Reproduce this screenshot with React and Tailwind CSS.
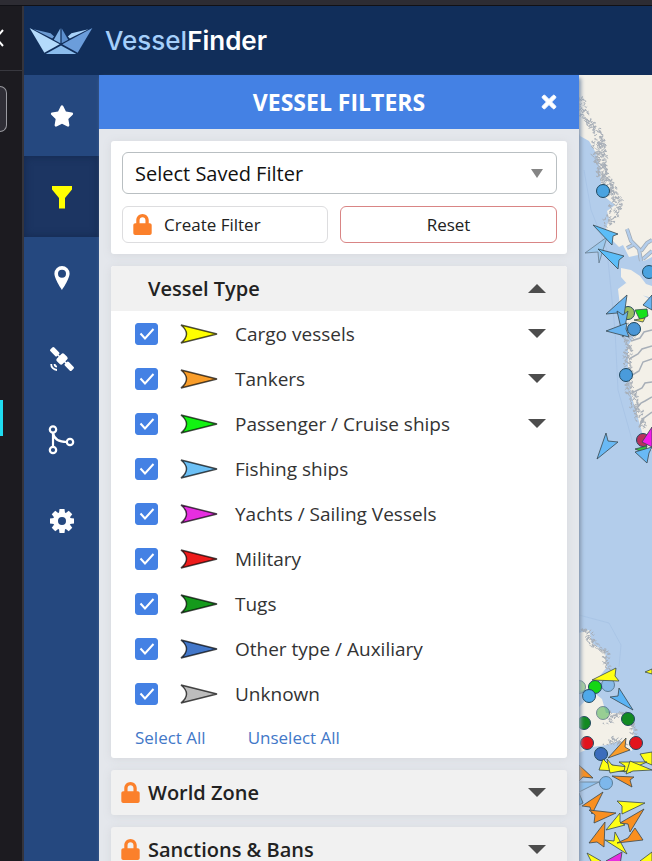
import { useState } from 'react';
import { FaLock, FaStar, FaTimes } from 'react-icons/fa';

const vesselTypes = [
  { label: 'Cargo vessels', color: '#ffff00', expandable: true },
  { label: 'Tankers', color: '#f99d2a', expandable: true },
  { label: 'Passenger / Cruise ships', color: '#12f212', expandable: true },
  { label: 'Fishing ships', color: '#6cc0f5' },
  { label: 'Yachts / Sailing Vessels', color: '#e62ee0' },
  { label: 'Military', color: '#ee1c1c' },
  { label: 'Tugs', color: '#159a1c' },
  { label: 'Other type / Auxiliary', color: '#4377c9' },
  { label: 'Unknown', color: '#bcbcbc' },
];

const circles = [
  { x: 24, y: 116, fill: '#4aa3e0' },
  { x: 70, y: 197, fill: '#4aa3e0' },
  { x: 49, y: 238, fill: '#98bd62' },
  { x: 55, y: 254, fill: '#4a96d6' },
  { x: 47, y: 300, fill: '#4a9bdb' },
  { x: 64, y: 365, fill: '#b8325c' },
  { x: 0, y: 612, fill: '#7cc070', faded: true },
  { x: 29, y: 610, fill: '#6aaee8', faded: true },
  { x: 16, y: 612, fill: '#14d614' },
  { x: 10, y: 621, fill: '#4fa9ea' },
  { x: 24, y: 638, fill: '#5cb85c', faded: true },
  { x: 49, y: 644, fill: '#128a22' },
  { x: 5, y: 648, fill: '#128a22' },
  { x: 8, y: 668, fill: '#e3141c' },
  { x: 57, y: 668, fill: '#e3141c' },
  { x: 22, y: 679, fill: '#3b6cbc' },
  { x: 27, y: 708, fill: '#5aa9ec', faded: true },
];

const arrows = [
  { points: '6,178 28,162 20,188 19,177', fill: '#8fc6ee', faded: true },
  { points: '14,150 39,159 34,161 33,170', fill: '#5bbdf8' },
  { points: '19,174 45,181 40,185 39,194', fill: '#5bbdf8' },
  { points: '48,220 27,239 38,238 45,241', fill: '#6ab4f0' },
  { points: '44,262 38,236 44,240 49,236', fill: '#6ab4f0' },
  { points: '27,256 48,248 47,254 50,262', fill: '#6ab4f0' },
  { points: '56,235 68,234 69,241 61,245', fill: '#18e018' },
  { points: '55,245 66,243 64,247', fill: '#e4e04a' },
  { points: '64,230 73,220 73,235', fill: '#6ab4f0' },
  { points: '18,384 27,358 29,366 39,367', fill: '#69b9f5' },
  { points: '63,367 73,352 73,372', fill: '#f31be8' },
  { points: '56,374 68,371 66,378', fill: '#35c43a' },
  { points: '56,377 73,372 70,378 68,388', fill: '#69b9f5' },
  { points: '66,597 73,594 73,599', fill: '#ffff14' },
  { points: '13,605 37,593 36,601 40,606', fill: '#ffff14' },
  { points: '54,635 40,613 39,621 31,622', fill: '#5bb4f5' },
  { points: '29,683 47,663 46,672 51,675', fill: '#f99d2a' },
  { points: '61,679 73,677 73,690 66,687', fill: '#ffff14' },
  { points: '24,684 20,695 52,697 28,688', fill: '#ffff14' },
  { points: '28,684 31,698 58,693 33,690', fill: '#ffff14' },
  { points: '40,687 68,687 45,697 46,691', fill: '#ffff14' },
  { points: '47,699 51,686 73,695 54,696', fill: '#ffff14' },
  { points: '33,701 55,702 51,705 53,712', fill: '#f98f20' },
  { points: '0,690 14,703 4,702 0,706', fill: '#f98f20' },
  { points: '0,707 20,707 0,717', fill: '#7cbcf0', faded: true },
  { points: '0,718 4,728 0,730', fill: '#5bb4f5' },
  { points: '24,717 3,731 11,732 13,739', fill: '#f98f20' },
  { points: '37,738 10,735 16,740 15,748', fill: '#f98f20' },
  { points: '66,728 38,726 43,731 43,739', fill: '#ffff14' },
  { points: '27,755 41,738 41,747 46,750', fill: '#ffff14' },
  { points: '65,734 41,748 49,749 51,757', fill: '#f98f20' },
  { points: '26,747 10,768 18,767 25,772', fill: '#f98f20' },
  { points: '48,779 26,765 35,766 36,757', fill: '#ffff14' },
  { points: '64,765 38,768 49,763 56,753', fill: '#f98f20' },
  { points: '43,777 27,786 41,790', fill: '#e62ee0' },
  { points: '8,778 22,786 14,790', fill: '#ffff14' },
  { points: '73,777 61,786 73,790', fill: '#ffff14' },
];

const coasts = [
  { points: [[0, 22], [3, 38], [9, 48], [18, 56], [22, 72], [22, 92], [27, 108], [30, 118]], spread: 5, step: 0.5 },
  { points: [[20, 66], [22, 98], [30, 110], [34, 120], [40, 126], [34, 138], [30, 150]], spread: 6, step: 0.5 },
  { points: [[54, 248], [49, 262], [48, 284], [50, 310], [57, 332], [63, 352]], spread: 4, step: 0.5 },
  { points: [[0, 555], [10, 557], [13, 569], [26, 577], [28, 594]], spread: 3, step: 0.7 },
  { points: [[28, 648], [34, 640], [44, 638], [52, 646], [54, 660]], spread: 3, step: 0.7 },
  { points: [[28, 669], [36, 664], [46, 668]], spread: 3, step: 0.7 },
];

// Turns a plain coastline into short broken strokes, the same ones on every render
function roughCoast({ points, spread, step }) {
  let seed = 7;
  const rand = () => {
    seed = (seed * 16807) % 2147483647;
    return seed / 2147483647 - 0.5;
  };
  let d = '';
  for (let i = 1; i < points.length; i++) {
    const [x0, y0] = points[i - 1];
    const [x1, y1] = points[i];
    const count = Math.round(Math.hypot(x1 - x0, y1 - y0) / step);
    for (let k = 0; k < count; k++) {
      const t = k / count;
      const x = x0 + (x1 - x0) * t + rand() * spread * 2;
      const y = y0 + (y1 - y0) * t + rand() * 3;
      d += `M${x.toFixed(1)} ${y.toFixed(1)}l${(rand() * 5).toFixed(1)} ${(rand() * 4).toFixed(1)}l${(rand() * 4).toFixed(1)} ${(rand() * 4).toFixed(1)}`;
    }
  }
  return d;
}

function BoatLogo() {
  return (
    <svg className="h-7 w-16 shrink-0" viewBox="0 0 196 84" aria-hidden="true">
      <path d="M14 6 66 18 77 28 71 34Z" fill="#6b9ad2" />
      <path d="M182 6 130 18 119 28 125 34Z" fill="#a9d3fa" />
      <path d="M96 3 76 38 96 49Z" fill="#7fb0e4" />
      <path d="M100 3 120 38 100 49Z" fill="#5c8fce" />
      <path d="M2 2 94 52 47 78Z" fill="#b4dafb" />
      <path d="M194 2 102 52 149 78Z" fill="#6b9ddb" />
      <path d="M98 56 51 82 145 82Z" fill="#8bbcec" />
    </svg>
  );
}

function FunnelIcon() {
  return (
    <svg className="h-6 w-6" viewBox="0 0 24 24" fill="currentColor" aria-hidden="true">
      <path d="M2 1h20v3.500L15 13v10.500H9V13L2 4.500Z" />
    </svg>
  );
}

function PinIcon() {
  return (
    <svg className="h-6 w-6" viewBox="0 0 24 24" fill="currentColor" fillRule="evenodd" aria-hidden="true">
      <path d="M12 0a7.600 7.600 0 0 0-7.600 7.600C4.400 13 12 24 12 24s7.600-11 7.600-16.400A7.600 7.600 0 0 0 12 0Zm0 3.800a4 4 0 1 1 0 8 4 4 0 0 1 0-8Z" />
    </svg>
  );
}

function SatelliteIcon() {
  return (
    <svg className="h-6 w-6" viewBox="0 0 24 24" fill="currentColor" aria-hidden="true">
      <g transform="rotate(45 12 12)">
        <rect x="-3" y="9.300" width="9.500" height="5.400" rx="1.500" />
        <rect x="17.500" y="9.300" width="9.500" height="5.400" rx="1.500" />
        <rect x="8" y="6.800" width="8" height="10.400" rx="2" />
        <path d="M6 11.200h12v1.600H6Z" />
      </g>
      <path d="M1.200 17a5.800 5.800 0 0 0 5.800 6M4.600 17A2.600 2.600 0 0 0 7 19.600" fill="none" stroke="currentColor" strokeWidth="1.800" />
    </svg>
  );
}

function RouteIcon() {
  return (
    <svg className="h-8 w-7" viewBox="0 0 28 32" fill="none" stroke="currentColor" strokeWidth="2.200" aria-hidden="true">
      <circle cx="5" cy="5.500" r="3.200" />
      <circle cx="5" cy="26" r="3.200" />
      <circle cx="22" cy="18" r="3.200" />
      <path d="M5 8.500v14.500M5 9c1 6 6 9 14 9" />
    </svg>
  );
}

function GearIcon() {
  return (
    <svg className="h-6 w-6" viewBox="0 0 24 24" aria-hidden="true">
      <circle cx="12" cy="12" r="6.500" fill="none" stroke="currentColor" strokeWidth="5" />
      {[0, 45, 90, 135, 180, 225, 270, 315].map(angle => (
        <path key={angle} d="M9 4 9.500 0h5l.5 4Z" fill="currentColor" transform={`rotate(${angle} 12 12)`} />
      ))}
    </svg>
  );
}

function SideItem({ label, active, children }) {
  return (
    <button
      type="button"
      aria-label={label}
      className={`flex h-[81px] w-full items-center justify-center ${
        active ? 'bg-[#1c3562] text-[#ffff00] shadow-[inset_0_0_8px_#14294f]' : 'text-white'
      }`}
    >
      {children}
    </button>
  );
}

function Triangle({ up }) {
  return (
    <svg className="h-[9px] w-[18px] shrink-0 text-[#4d4d4d]" viewBox="0 0 18 9" fill="currentColor" aria-hidden="true">
      <path d={up ? 'M0 9 9 0l9 9Z' : 'M0 0h18L9 9Z'} />
    </svg>
  );
}

function VesselRow({ label, color, expandable, checked, onChange }) {
  return (
    <li className="flex h-[45px] items-center justify-between pl-6 pr-[21px]">
      <label className="flex items-center">
        <span className="grid place-items-center">
          <input
            type="checkbox"
            checked={checked}
            onChange={onChange}
            className="col-start-1 row-start-1 h-[22px] w-[23px] appearance-none rounded-[3px] border border-[#4481e4] checked:bg-[#4481e4]"
          />
          {checked && (
            <svg className="pointer-events-none col-start-1 row-start-1 h-4 w-4" viewBox="0 0 16 16" fill="none" stroke="white" strokeWidth="2" aria-hidden="true">
              <path d="m1.500 7.500 4.500 5 8.500-9.500" />
            </svg>
          )}
        </span>
        <svg className="ml-[22px] h-5 w-[38px]" viewBox="0 0 38 20" aria-hidden="true">
          <path d="M1 1 37 10 1 19Q12 10 1 1Z" fill={color} stroke="#000" strokeOpacity="0.7" strokeWidth="1.500" />
        </svg>
        <span className="ml-[17px] text-[19px] leading-6 text-[#333]">{label}</span>
      </label>
      {expandable && (
        <button type="button" aria-label={`Expand ${label}`}>
          <Triangle />
        </button>
      )}
    </li>
  );
}

function LockedSection({ title }) {
  return (
    <section className="shrink-0 rounded-[3px] bg-[#f1f1f1] shadow-[0_1px_8px_#d5d7dc]">
      <button type="button" className="flex h-[45px] w-full items-center pl-[10px] pr-[21px]">
        <FaLock className="h-[21px] w-[19px] text-[#fb802b]" />
        <span className="ml-2 flex-1 text-left text-[20px] font-semibold leading-6 text-[#222]">{title}</span>
        <Triangle />
      </button>
    </section>
  );
}

function VesselMap() {
  return (
    <svg className="block h-full w-full" viewBox="0 0 73 786" preserveAspectRatio="xMinYMin slice" role="img" aria-label="Vessel map">
      <rect width="2000" height="786" fill="#b3cdeb" />
      <g fill="#f3f0e8">
        <path d="M0 0h73v182l-8 4-6-6-9 2-6-12-4 2-8-8-5-10 3-10-2-8 8-6-10-8-4-14-1-16-4-14-7-12-9-5-5-13-4-9Z" />
        <path d="M42 193l10 2 9 6 6 8 6 2v12l-14-4-10-9-7-8Z" />
        <path d="M39 214l8-6 10 3 8 10 8 4v150h-8l-2-18-4-14-7-24-3-22 0-26 6-10-12-12Z" />
        <path d="M0 558 10 555 13 568 26 577 28 592 20 602 14 617 23 624 27 638 43 638 52 646 55 660 53 676 46 672 40 666 28 670 13 672 0 678Z" />
      </g>
      <path d="M48 154l4 12 8 8 2 12M62 176l6-8 5-3M54 170l-6 3M64 184l9-8" fill="none" stroke="#9fa9b4" strokeWidth="4" />
      <path d="M48 154l4 12 8 8 2 12M62 176l6-8 5-3M54 170l-6 3M64 184l9-8" fill="none" stroke="#b3cdeb" strokeWidth="2.500" />
      <path d="M0 616c5 0 10-3 14-2l-8 12-6 6Z" fill="#b3cdeb" />
      <g fill="none" stroke="#a8afb8">
        <path d="M50 284l9-5 4-5 10-3M50 302l10-6 4-9 9-3M51 319l12-6 3-5 7-1M55 337l7-9 4-2 7-4M52 266l9-3 4-6 8-2M60 352l5-9 8-6" strokeWidth="1.500" />
        {coasts.map((coast, i) => (
          <path key={i} d={roughCoast(coast)} strokeWidth="1" />
        ))}
      </g>
      <path d="M5 95l7 40 16 40 8 80 3 60 14 50M0 540l30 8 12 22-2 22" fill="none" stroke="#a2bfe2" strokeWidth="0.600" />
      {circles.map(c => (
        <circle key={`${c.x}-${c.y}`} cx={c.x} cy={c.y} r="6.500" fill={c.fill} stroke="#20485f" strokeWidth="1" opacity={c.faded ? 0.6 : 1} />
      ))}
      {arrows.map(a => (
        <polygon key={a.points} points={a.points} fill={a.fill} stroke="#37474f" strokeWidth="0.800" opacity={a.faded ? 0.6 : 1} />
      ))}
    </svg>
  );
}

export default function App() {
  const [selected, setSelected] = useState(vesselTypes.map(v => v.label));

  const toggle = label =>
    setSelected(prev => (prev.includes(label) ? prev.filter(l => l !== label) : [...prev, label]));

  return (
    <div className="flex h-screen flex-col overflow-hidden bg-[#1c1b20] font-['Open_Sans','Noto_Sans',sans-serif]">
      <div className="h-[6px] shrink-0 border-b border-[#111116] bg-[#2d2c33]" />

      <div className="flex min-h-0 flex-1">
        {/* Edge of the browser's own side bar */}
        <aside className="flex w-6 shrink-0 flex-col overflow-hidden border-r-2 border-[#34343c]">
          <div className="flex h-[65px] shrink-0 items-center border-b border-[#38383f]">
            <svg className="h-5 w-1" viewBox="0 0 4 20" fill="none" stroke="white" strokeWidth="2" aria-hidden="true">
              <path d="m3 2-7 8 7 8" />
            </svg>
          </div>
          <div className="mt-[15px] h-[46px] w-[7px] shrink-0 rounded-r-lg border border-l-0 border-[#9a9aa0] bg-[#2f2e36]" />
          <div className="mt-[268px] h-9 w-[3px] shrink-0 bg-[#1fdcf0]" />
        </aside>

        <div className="flex min-w-0 flex-1 flex-col">
          <header className="flex h-[69px] shrink-0 items-center bg-[#112e5a] pl-[5px]">
            <a href="#" className="flex items-center gap-3">
              <BoatLogo />
              <span className="font-[Inter,sans-serif] text-[26px] font-medium leading-8 text-[#a5cffa]">
                Vessel<span className="font-semibold text-white">Finder</span>
              </span>
            </a>
          </header>

          <div className="flex min-h-0 flex-1">
            <nav className="w-[75px] shrink-0 bg-[#25487f]">
              <SideItem label="Favourites"><FaStar className="h-6 w-6" /></SideItem>
              <SideItem label="Filters" active><FunnelIcon /></SideItem>
              <SideItem label="Places"><PinIcon /></SideItem>
              <SideItem label="Satellite"><SatelliteIcon /></SideItem>
              <SideItem label="Routes"><RouteIcon /></SideItem>
              <SideItem label="Settings"><GearIcon /></SideItem>
            </nav>

            <main className="z-10 flex w-[480px] shrink-0 flex-col bg-[#e4e7ec] shadow-[2px_3px_4px_#8496ad]">
              <div className="grid h-[54px] shrink-0 grid-cols-[1fr_auto_1fr] items-center bg-[#4481e4] text-white">
                <h1 className="col-start-2 text-[23px] font-bold leading-8">VESSEL FILTERS</h1>
                <button type="button" aria-label="Close" className="mr-[21px] justify-self-end">
                  <FaTimes className="h-5 w-[18px]" stroke="currentColor" strokeWidth="24" />
                </button>
              </div>

              <div className="flex min-h-0 flex-1 flex-col gap-3 overflow-hidden p-3">
                <section className="shrink-0 rounded-[3px] bg-white p-[11px] pr-[10px] shadow-[0_1px_8px_#d5d7dc]">
                  <div className="grid items-center">
                    <select
                      aria-label="Saved filter"
                      className="col-start-1 row-start-1 h-[42px] w-full appearance-none rounded-md border border-[#b9bfc2] bg-white px-3 pt-[2px] text-[20px] text-[#111]"
                    >
                      <option>Select Saved Filter</option>
                    </select>
                    <span className="pointer-events-none col-start-1 row-start-1 mr-[14px] justify-self-end">
                      <svg className="h-[9px] w-3" viewBox="0 0 12 9" fill="#858585" aria-hidden="true">
                        <path d="M0 0h12L6 9Z" />
                      </svg>
                    </span>
                  </div>
                  <div className="mt-3 grid grid-cols-[19fr_20fr] gap-3 text-[17px] leading-6 text-[#222]">
                    <button type="button" className="flex h-[37px] items-center rounded-md border border-[#dddddf] pl-[10px]">
                      <FaLock className="h-[21px] w-[19px] text-[#fb802b]" />
                      <span className="ml-3">Create Filter</span>
                    </button>
                    <button type="button" className="h-[37px] rounded-md border border-[#d98585]">Reset</button>
                  </div>
                </section>

                <section className="shrink-0 overflow-clip rounded-[3px] bg-white shadow-[0_1px_8px_#d5d7dc]">
                  <button type="button" className="flex h-[45px] w-full items-center justify-between bg-[#f1f1f1] pl-[37px] pr-[21px]">
                    <span className="text-[20px] font-semibold leading-6 text-[#222]">Vessel Type</span>
                    <Triangle up />
                  </button>
                  <ul>
                    {vesselTypes.map(v => (
                      <VesselRow key={v.label} {...v} checked={selected.includes(v.label)} onChange={() => toggle(v.label)} />
                    ))}
                  </ul>
                  <div className="flex h-[42px] items-center gap-[42px] pl-6 pt-[2px] text-[17px] leading-6 text-[#4278c8]">
                    <button type="button" onClick={() => setSelected(vesselTypes.map(v => v.label))}>Select All</button>
                    <button type="button" onClick={() => setSelected([])}>Unselect All</button>
                  </div>
                </section>

                <LockedSection title="World Zone" />
                <LockedSection title="Sanctions & Bans" />
              </div>
            </main>

            <div className="min-w-0 flex-1 overflow-hidden bg-[#b3cdeb]">
              <VesselMap />
            </div>
          </div>
        </div>
      </div>
    </div>
  );
}
